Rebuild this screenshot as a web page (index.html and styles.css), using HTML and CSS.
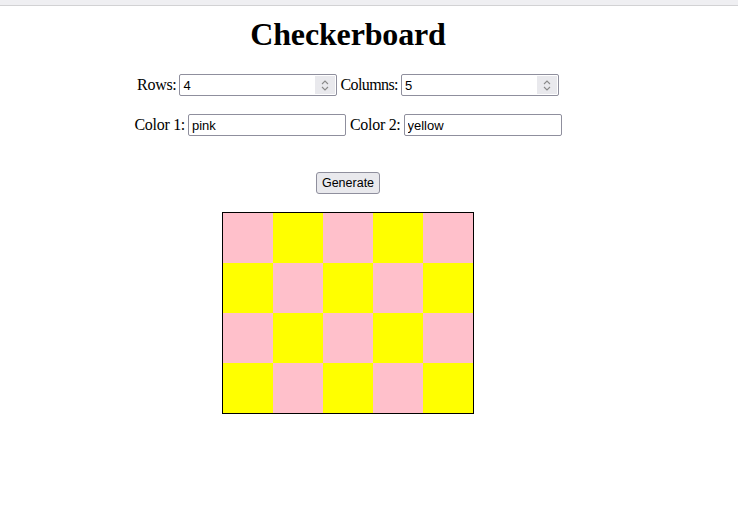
FILE: index.html
```html
<!DOCTYPE html>
<html lang="en">
<head>
<meta charset="utf-8">
<title>Checkerboard</title>
<link rel="stylesheet" href="styles.css">
</head>
<body>
<div class="topbar"></div>
<main class="page">
  <h1 class="title">Checkerboard</h1>
  <div class="row">
    <label class="label" for="rows">Rows:</label>
    <span class="num-wrap">
      <input class="field" id="rows" type="text" value="4">
      <span class="spin" aria-hidden="true">
        <svg width="8" height="14" viewBox="0 0 8 14"><path d="M1 6 L4 3 L7 6" fill="none" stroke="#8a8a8a" stroke-width="1.1"/><path d="M1 9 L4 12 L7 9" fill="none" stroke="#8a8a8a" stroke-width="1.1"/></svg>
      </span>
    </span>
    <label class="label label-tight" for="cols">Columns:</label>
    <span class="num-wrap">
      <input class="field" id="cols" type="text" value="5">
      <span class="spin" aria-hidden="true">
        <svg width="8" height="14" viewBox="0 0 8 14"><path d="M1 6 L4 3 L7 6" fill="none" stroke="#8a8a8a" stroke-width="1.1"/><path d="M1 9 L4 12 L7 9" fill="none" stroke="#8a8a8a" stroke-width="1.1"/></svg>
      </span>
    </span>
  </div>
  <div class="row row-colors">
    <label class="label" for="c1">Color 1:</label>
    <input class="field" id="c1" type="text" value="pink">
    <label class="label" for="c2">Color 2:</label>
    <input class="field" id="c2" type="text" value="yellow">
  </div>
  <button class="btn" type="button">Generate</button>
  <div class="board">
    <div class="cell pink"></div><div class="cell yellow"></div><div class="cell pink"></div><div class="cell yellow"></div><div class="cell pink"></div>
    <div class="cell yellow"></div><div class="cell pink"></div><div class="cell yellow"></div><div class="cell pink"></div><div class="cell yellow"></div>
    <div class="cell pink"></div><div class="cell yellow"></div><div class="cell pink"></div><div class="cell yellow"></div><div class="cell pink"></div>
    <div class="cell yellow"></div><div class="cell pink"></div><div class="cell yellow"></div><div class="cell pink"></div><div class="cell yellow"></div>
  </div>
</main>
</body>
</html>
```
FILE: styles.css
```css
html, body {
  margin: 0;
  padding: 0;
  background: #ffffff;
}

body {
  font-family: "Liberation Serif", "Times New Roman", serif;
  font-size: 16px;
  color: #000;
}

.topbar {
  height: 5px;
  background: #efeff2;
  border-bottom: 1px solid #d2d2d4;
}

.page {
  width: 680px;
  margin-left: 8px;
  display: flex;
  flex-direction: column;
  align-items: center;
}

.title {
  margin: 10px 0 0;
  font-size: 32px;
  line-height: 37px;
  font-weight: bold;
  letter-spacing: -0.15px;
}

.row {
  margin-top: 21px;
  height: 22px;
  display: flex;
  align-items: center;
  justify-content: center;
}

.row-colors {
  margin-top: 18px;
}

.label {
  font-size: 16px;
  line-height: 18px;
  letter-spacing: -0.3px;
  margin-right: 3px;
}

.field + .label,
.num-wrap + .label {
  margin-left: 4px;
}

.num-wrap + .label-tight {
  margin-left: 3px;
  letter-spacing: -0.6px;
}

.num-wrap {
  position: relative;
  display: block;
}

.field {
  box-sizing: border-box;
  width: 158px;
  height: 22px;
  margin: 0;
  padding: 1px 3px;
  border: 1px solid #8f8f9d;
  border-radius: 2px;
  background: #fff;
  font-family: "Liberation Sans", Arial, sans-serif;
  font-size: 13px;
  color: #000;
}

.spin {
  position: absolute;
  right: 2px;
  top: 2px;
  width: 20px;
  height: 18px;
  background: #e9e9ed;
  display: flex;
  align-items: center;
  justify-content: center;
}

.btn {
  margin-top: 36px;
  box-sizing: border-box;
  width: 64px;
  height: 22px;
  padding: 0;
  border: 1px solid #8f8f9d;
  border-radius: 3px;
  background: #e9e9ed;
  font-family: "Liberation Sans", Arial, sans-serif;
  font-size: 12.5px;
  color: #000;
}

.board {
  margin-top: 18px;
  display: grid;
  grid-template-columns: repeat(5, 50px);
  grid-auto-rows: 50px;
  border: 1px solid #000;
}

.pink {
  background: #ffc0cb;
}

.yellow {
  background: #ffff00;
}
```
